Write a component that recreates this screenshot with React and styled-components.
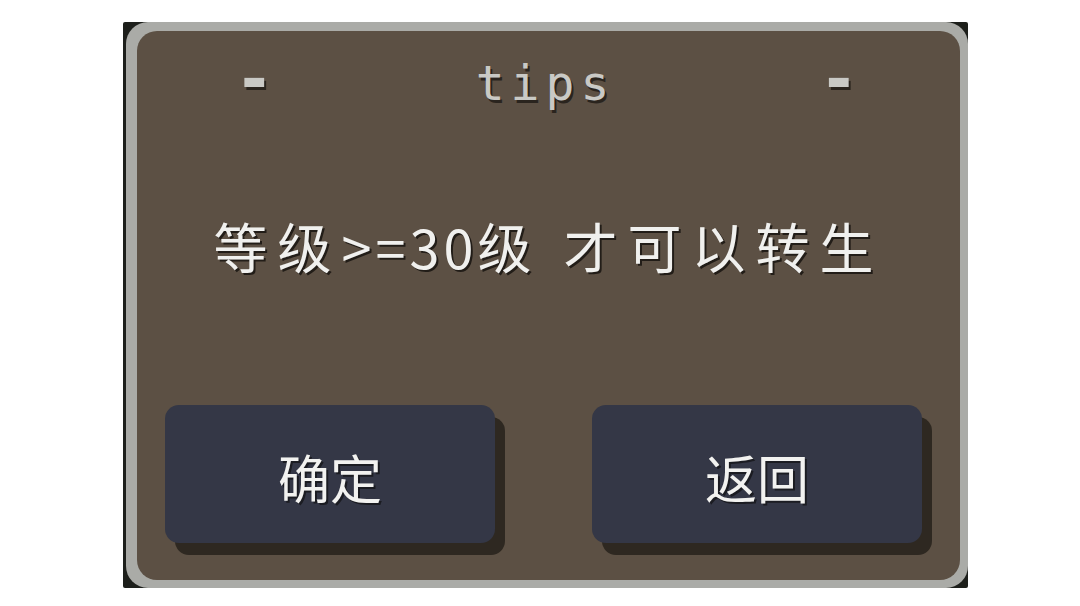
import React from "react";
import styled, { createGlobalStyle } from "styled-components";

const GlobalStyle = createGlobalStyle`
  html, body {
    margin: 0;
    padding: 0;
    background: #ffffff;
  }
  * {
    box-sizing: border-box;
  }
`;

const Page = styled.div`
  width: 1080px;
  height: 606px;
  padding: 22px 0 0 123px;
  background: #ffffff;
`;

const Frame = styled.div`
  width: 845px;
  height: 566px;
  background: #1d1f1b;
  padding: 0 0 0 3px;
  border-radius: 2px;
`;

const Rim = styled.div`
  width: 100%;
  height: 100%;
  background: #aaaba7;
  border-radius: 22px;
  padding: 9px 8px 8px 11px;
`;

const Panel = styled.div`
  display: flex;
  flex-direction: column;
  width: 100%;
  height: 100%;
  background: #5c5044;
  border-radius: 20px;
`;

const TitleRow = styled.div`
  display: flex;
  align-items: center;
  justify-content: space-between;
  height: 104px;
  padding: 0 102px 0 98px;
  font-family: "DejaVu Sans Mono", "Liberation Mono", monospace;
  color: #c9c9c5;
  text-shadow: 2px 3px 0 #2a241e;
`;

const Dash = styled.span`
  font-size: 64px;
  font-weight: bold;
  line-height: 1;
  margin-top: -8px;
`;

const Title = styled.span`
  font-size: 48px;
  letter-spacing: 6px;
  line-height: 1;
  margin-right: 2px;
`;

const Message = styled.div`
  display: flex;
  align-items: center;
  justify-content: center;
  height: 220px;
  font-family: "Noto Sans CJK SC", "Noto Sans", sans-serif;
  font-size: 54px;
  letter-spacing: 10px;
  color: #f0f0ee;
  text-shadow: 2px 2px 0 #221d18;
  white-space: pre;
`;

const Narrow = styled.span`
  letter-spacing: 4px;
`;

const ButtonRow = styled.div`
  display: flex;
  justify-content: space-between;
  padding: 50px 38px 0 28px;
`;

const Button = styled.button`
  display: flex;
  align-items: center;
  justify-content: center;
  width: 330px;
  height: 138px;
  border: none;
  border-radius: 14px;
  background: #343746;
  box-shadow: 10px 12px 0 #2e2821;
  font-family: "Noto Sans CJK SC", "Noto Sans", sans-serif;
  font-size: 52px;
  color: #f2f2f0;
  text-shadow: 2px 2px 0 #1b1c22;
  padding: 4px 0 0 0;
  cursor: pointer;
`;

export default function App() {
  return (
    <>
      <GlobalStyle />
      <Page>
        <Frame>
          <Rim>
            <Panel>
              <TitleRow>
                <Dash>-</Dash>
                <Title>tips</Title>
                <Dash>-</Dash>
              </TitleRow>
              <Message>
                等级<Narrow>&gt;=30</Narrow>级 才可以转生
              </Message>
              <ButtonRow>
                <Button>确定</Button>
                <Button>返回</Button>
              </ButtonRow>
            </Panel>
          </Rim>
        </Frame>
      </Page>
    </>
  );
}
